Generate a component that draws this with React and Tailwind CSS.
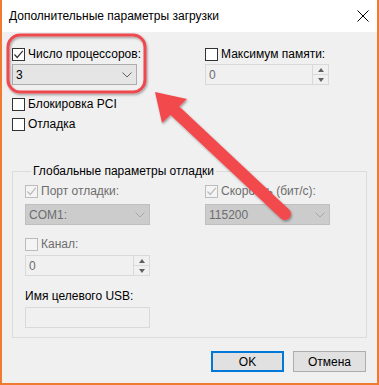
import React from 'react';

const Tick = ({ color }) => (
  <svg width="11" height="11" viewBox="0 0 11 11">
    <path d="M1.5 5.5 L4.2 8.5 L9.8 1.8" fill="none" stroke={color} strokeWidth="1.2" />
  </svg>
);

const Chevron = ({ color }) => (
  <svg width="10" height="6" viewBox="0 0 10 6">
    <path d="M0.5 0.5 L5 5 L9.5 0.5" fill="none" stroke={color} strokeWidth="1" />
  </svg>
);

const CheckRow = ({ label, checked, disabled }) => (
  <div className="flex h-[14px] items-center gap-[3px]">
    <span
      className={
        disabled
          ? 'flex h-[13px] w-[13px] shrink-0 items-center justify-center border border-[#bcbcbc] bg-[#f4f4f4]'
          : 'flex h-[13px] w-[13px] shrink-0 items-center justify-center border border-[#333333] bg-white'
      }
    >
      {checked && <Tick color={disabled ? '#bcbcbc' : '#333333'} />}
    </span>
    <span className={disabled ? 'whitespace-nowrap text-[#6d6d6d]' : 'whitespace-nowrap text-black'}>{label}</span>
  </div>
);

const Combo = ({ value, disabled, width }) => (
  <div
    className={
      disabled
        ? 'flex h-[21px] items-center justify-between border border-[#bfbfbf] bg-[#cccccc] pl-[3px] pr-[4px] text-[#6d6d6d]'
        : 'flex h-[21px] items-center justify-between border border-[#adadad] bg-[#e5e5e5] pl-[3px] pr-[4px] text-black'
    }
    style={{ width }}
  >
    <span>{value}</span>
    <Chevron color={disabled ? '#a8a8a8' : '#606060'} />
  </div>
);

const Spinner = ({ value, width }) => (
  <div className="flex h-[21px] border border-[#d9d9d9] bg-[#f0f0f0]" style={{ width }}>
    <div className="flex flex-1 items-center pl-[3px] text-[#6d6d6d]">{value}</div>
    <div className="flex w-[16px] flex-col border-l border-[#d9d9d9]">
      <div className="flex flex-1 items-center justify-center border-b border-[#d9d9d9]">
        <svg width="6" height="4" viewBox="0 0 6 4"><path d="M0 4 L3 0 L6 4 Z" fill="#606060" /></svg>
      </div>
      <div className="flex flex-1 items-center justify-center">
        <svg width="6" height="4" viewBox="0 0 6 4"><path d="M0 0 L3 4 L6 0 Z" fill="#606060" /></svg>
      </div>
    </div>
  </div>
);

export default function App() {
  return (
    <div className="relative flex h-[385px] w-[379px] flex-col border-x-2 border-b-2 border-[#f07a30] bg-[#f0f0f0] font-['Liberation_Sans',Arial,sans-serif] text-[12px] leading-[14px] text-black">
      <div className="flex h-[32px] shrink-0 items-center justify-between bg-white pl-[7px] pr-[8px]">
        <span className="text-[12px]">Дополнительные параметры загрузки</span>
        <svg width="12" height="12" viewBox="0 0 12 12">
          <path d="M0.5 0.5 L11.5 11.5 M11.5 0.5 L0.5 11.5" stroke="#000" strokeWidth="1" />
        </svg>
      </div>

      <div className="flex flex-col px-[10px]">
        <div className="mt-[15px] flex gap-[68px]">
          <div className="flex w-[125px] flex-col gap-[3px]">
            <CheckRow label="Число процессоров:" checked />
            <Combo value="3" width={125} />
          </div>
          <div className="flex w-[124px] flex-col gap-[3px]">
            <CheckRow label="Максимум памяти:" />
            <Spinner value="0" width={124} />
          </div>
        </div>

        <div className="mt-[12px] flex flex-col gap-[6px]">
          <CheckRow label="Блокировка PCI" />
          <CheckRow label="Отладка" />
        </div>

        <fieldset className="mt-[33px] border border-[#dcdcdc] pb-[9px] pl-[12px] pt-[6px]">
          <legend className="ml-[6px] px-[2px] leading-[14px]">Глобальные параметры отладки</legend>
          <div className="flex gap-[55px]">
            <div className="flex w-[125px] flex-col gap-[6px]">
              <CheckRow label="Порт отладки:" checked disabled />
              <Combo value="COM1:" width={125} disabled />
            </div>
            <div className="flex w-[125px] flex-col gap-[6px]">
              <CheckRow label="Скорость (бит/с):" checked disabled />
              <Combo value="115200" width={125} disabled />
            </div>
          </div>
          <div className="mt-[12px] flex w-[125px] flex-col gap-[4px]">
            <CheckRow label="Канал:" disabled />
            <Spinner value="0" width={125} />
          </div>
          <div className="mt-[13px]">Имя целевого USB:</div>
          <div className="mt-[4px] h-[21px] w-[125px] border border-[#d9d9d9] bg-[#f0f0f0]" />
        </fieldset>

        <div className="mr-[1px] mt-[13px] flex justify-end gap-[9px]">
          <button className="flex h-[21px] w-[73px] items-center justify-center border-2 border-[#0078d7] bg-[#e1e1e1]">
            OK
          </button>
          <button className="flex h-[21px] w-[73px] items-center justify-center border border-[#adadad] bg-[#e1e1e1]">
            Отмена
          </button>
        </div>
      </div>

      <svg
        className="pointer-events-none absolute left-[-2px] top-0 h-[385px] w-[379px]"
        viewBox="0 0 379 385"
      >
        <defs>
          <filter id="sh" x="-20%" y="-20%" width="140%" height="140%">
            <feDropShadow dx="1" dy="1.5" stdDeviation="1.2" floodColor="#000" floodOpacity="0.35" />
          </filter>
        </defs>
        <rect x="8" y="35" width="137" height="57" rx="12" fill="none" stroke="#ee4a50" strokeWidth="3" filter="url(#sh)" />
        <g filter="url(#sh)">
          <line x1="172" y1="108" x2="285" y2="214" stroke="#f2484e" strokeWidth="12" strokeLinecap="round" />
          <polygon points="155,92 162,123 187,99" fill="#f2484e" />
        </g>
      </svg>
    </div>
  );
}
